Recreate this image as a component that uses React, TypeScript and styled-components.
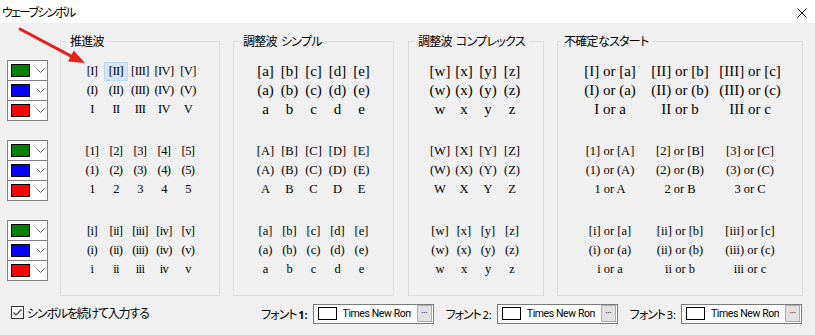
import React from "react";
import styled, { createGlobalStyle } from "styled-components";

const GlobalStyle = createGlobalStyle`
  html, body { margin: 0; padding: 0; background: #f0f0f0; }
  body { font-family: "Noto Sans CJK JP", "Noto Sans", sans-serif; overflow: hidden; }
`;

const Window = styled.div`
  position: relative;
  width: 815px;
  height: 335px;
  background: #f0f0f0;
  display: flex;
  flex-direction: column;
  overflow: hidden;
  color: #000;
`;

const TitleBar = styled.div`
  height: 23px;
  background: #fff;
  display: flex;
  align-items: center;
  justify-content: space-between;
  padding: 0 8px 0 2px;
  box-sizing: border-box;
`;

const Title = styled.span`
  font-size: 12px;
  line-height: 16px;
  font-feature-settings: "palt" 1;
  letter-spacing: -1.8px;
`;

const CloseButton = styled.div`
  width: 10px;
  height: 10px;
  display: flex;
  margin-top: 2px;
`;

const Main = styled.div`
  display: flex;
  align-items: flex-start;
  padding: 10px 0 0 7px;
`;

const PickerColumn = styled.div`
  display: flex;
  flex-direction: column;
  gap: 19px;
  padding-top: 27px;
`;

const PickerStack = styled.div`
  width: 41px;
  box-sizing: border-box;
  border: 1px solid #828282;
  background: #fff;
  display: flex;
  flex-direction: column;
`;

const PickerRow = styled.div<{ $first?: boolean }>`
  height: 19px;
  display: flex;
  align-items: center;
  padding-left: 3px;
  gap: 6px;
  border-top: ${(p) => (p.$first ? "none" : "1px solid #828282")};
`;

const Swatch = styled.div<{ $color: string }>`
  width: 19px;
  height: 13px;
  box-sizing: border-box;
  border: 1px solid #000;
  background: ${(p) => p.$color};
`;

const Chevron = styled.svg`
  width: 9px;
  height: 5px;
`;

const Group = styled.fieldset<{ $width: number; $gapLeft: number }>`
  width: ${(p) => p.$width}px;
  margin: 0 0 0 ${(p) => p.$gapLeft}px;
  padding: 11px 0 15px 0;
  box-sizing: border-box;
  border: 1px solid #dcdcdc;
  min-width: 0;
`;

const Legend = styled.legend<{ $inset: number }>`
  font-size: 12px;
  line-height: 16px;
  margin-left: ${(p) => p.$inset}px;
  padding: 0 4px 0 4px;
  white-space: pre;
  font-feature-settings: "palt" 1;
  letter-spacing: -0.7px;
`;

const Sections = styled.div`
  display: flex;
  flex-direction: column;
  gap: 20px;
`;

const SymbolGrid = styled.div<{ $cols: number; $cellW: number }>`
  height: 60px;
  display: grid;
  grid-template-columns: repeat(${(p) => p.$cols}, ${(p) => p.$cellW}px);
  grid-auto-rows: 19px;
  justify-content: center;
  align-content: center;
`;

const SymbolCell = styled.div<{ $size: number; $tight?: boolean; $selected?: boolean }>`
  display: flex;
  align-items: center;
  justify-content: center;
  box-sizing: border-box;
  font-family: "Liberation Serif", "Times New Roman", serif;
  font-size: ${(p) => p.$size}px;
  letter-spacing: ${(p) => (p.$tight ? "-0.6px" : "0")};
  line-height: 1;
  white-space: nowrap;
  border: 1px solid ${(p) => (p.$selected ? "#bcd8f0" : "transparent")};
  background: ${(p) => (p.$selected ? "#d5e6f5" : "transparent")};
`;

const Footer = styled.div`
  height: 35px;
  display: flex;
  align-items: center;
  padding: 0 13px 0 11px;
  gap: 12px;
`;

const CheckRow = styled.label`
  display: flex;
  align-items: center;
  gap: 3px;
  font-size: 12px;
  font-feature-settings: "palt" 1;
  letter-spacing: -1.2px;
  margin-top: -3px;
`;

const CheckBox = styled.span`
  width: 13px;
  height: 13px;
  box-sizing: border-box;
  border: 1px solid #333;
  background: #fff;
  display: flex;
  align-items: center;
  justify-content: center;
`;

const FontField = styled.div<{ $push?: boolean }>`
  display: flex;
  align-items: center;
  gap: 5px;
  margin-left: ${(p) => (p.$push ? "auto" : "0")};
`;

const FontLabel = styled.span`
  font-size: 12px;
  font-feature-settings: "palt" 1;
  letter-spacing: -1px;
  white-space: pre;
`;

const FontNum = styled.span<{ $bold?: boolean }>`
  font-family: "Noto Sans", sans-serif;
  font-weight: ${(p) => (p.$bold ? 700 : 400)};
  font-size: 11px;
  letter-spacing: 0;
`;

const FontBox = styled.div`
  width: 121px;
  height: 20px;
  box-sizing: border-box;
  border: 1px solid #7a7a7a;
  background: #fff;
  display: flex;
  align-items: center;
  padding: 0 1px 0 4px;
  gap: 6px;
`;

const FontSwatch = styled.div`
  width: 19px;
  height: 13px;
  flex-shrink: 0;
  box-sizing: border-box;
  border: 1px solid #000;
  background: #fff;
`;

const FontName = styled.span`
  flex: 1;
  min-width: 0;
  overflow: hidden;
  white-space: nowrap;
  font-family: "Roboto", "Noto Sans", sans-serif;
  font-size: 10.5px;
  letter-spacing: -0.4px;
`;

const DotsButton = styled.div`
  width: 15px;
  height: 17px;
  flex-shrink: 0;
  box-sizing: border-box;
  border: 1px solid #adadad;
  background: #e1e1e1;
  display: flex;
  align-items: center;
  justify-content: center;
  font-family: "DejaVu Sans", sans-serif;
  font-size: 8px;
  letter-spacing: -0.5px;
  color: #222;
`;

const ArrowOverlay = styled.svg`
  position: absolute;
  left: 0;
  top: 0;
  width: 100px;
  height: 80px;
  pointer-events: none;
`;

type Section = { rows: string[][]; size: number };
type GroupDef = {
  title: string;
  width: number;
  gapLeft: number;
  cellW: number;
  inset: number;
  tight?: boolean;
  sections: Section[];
};

const triple = (bases: string[], size: number): Section => ({
  size,
  rows: [bases.map((b) => `[${b}]`), bases.map((b) => `(${b})`), bases],
});

const orTriple = (a: string[], b: string[], size: number): Section => ({
  size,
  rows: [
    a.map((x, i) => `[${x}] or [${b[i]}]`),
    a.map((x, i) => `(${x}) or (${b[i]})`),
    a.map((x, i) => `${x} or ${b[i]}`),
  ],
});

const groups: GroupDef[] = [
  {
    title: "推進波",
    width: 160,
    gapLeft: 12,
    cellW: 24,
    inset: 5,
    tight: true,
    sections: [
      triple(["I", "II", "III", "IV", "V"], 12.5),
      triple(["1", "2", "3", "4", "5"], 12.5),
      triple(["i", "ii", "iii", "iv", "v"], 12.5),
    ],
  },
  {
    title: "調整波  シンプル",
    width: 161,
    gapLeft: 13,
    cellW: 24,
    inset: 5,
    sections: [
      triple(["a", "b", "c", "d", "e"], 15),
      triple(["A", "B", "C", "D", "E"], 12.5),
      triple(["a", "b", "c", "d", "e"], 12.5),
    ],
  },
  {
    title: "調整波  コンプレックス",
    width: 136,
    gapLeft: 14,
    cellW: 24,
    inset: 5,
    sections: [
      triple(["w", "x", "y", "z"], 15),
      triple(["W", "X", "Y", "Z"], 12.5),
      triple(["w", "x", "y", "z"], 12.5),
    ],
  },
  {
    title: "不確定なスタート",
    width: 246,
    gapLeft: 13,
    cellW: 70,
    inset: 2,
    sections: [
      orTriple(["I", "II", "III"], ["a", "b", "c"], 15),
      orTriple(["1", "2", "3"], ["A", "B", "C"], 12.5),
      orTriple(["i", "ii", "iii"], ["a", "b", "c"], 12.5),
    ],
  },
];

const pickerColors = ["#008000", "#0000ff", "#ff0000"];

export default function App() {
  return (
    <>
      <GlobalStyle />
      <Window>
        <TitleBar>
          <Title>ウェーブシンボル</Title>
          <CloseButton>
            <svg width="10" height="10" viewBox="0 0 10 10">
              <path d="M0.5 0.5 L9.5 9.5 M9.5 0.5 L0.5 9.5" stroke="#000" strokeWidth="1" />
            </svg>
          </CloseButton>
        </TitleBar>
        <Main>
          <PickerColumn>
            {[0, 1, 2].map((s) => (
              <PickerStack key={s}>
                {pickerColors.map((c, i) => (
                  <PickerRow key={c} $first={i === 0}>
                    <Swatch $color={c} />
                    <Chevron viewBox="0 0 9 5">
                      <path d="M0.5 0.5 L4.5 4.5 L8.5 0.5" fill="none" stroke="#606060" strokeWidth="1" />
                    </Chevron>
                  </PickerRow>
                ))}
              </PickerStack>
            ))}
          </PickerColumn>
          {groups.map((g) => (
            <Group key={g.title} $width={g.width} $gapLeft={g.gapLeft}>
              <Legend $inset={g.inset}>{g.title}</Legend>
              <Sections>
                {g.sections.map((sec, si) => (
                  <SymbolGrid key={si} $cols={sec.rows[0].length} $cellW={g.cellW}>
                    {sec.rows.flatMap((row, ri) =>
                      row.map((t, ci) => (
                        <SymbolCell
                          key={`${ri}-${ci}`}
                          $size={sec.size}
                          $tight={g.tight}
                          $selected={g.title === "推進波" && si === 0 && ri === 0 && ci === 1}
                        >
                          {t}
                        </SymbolCell>
                      ))
                    )}
                  </SymbolGrid>
                ))}
              </Sections>
            </Group>
          ))}
        </Main>
        <Footer>
          <CheckRow>
            <CheckBox>
              <svg width="11" height="11" viewBox="0 0 11 11">
                <path d="M1.5 5.5 L4 8 L9.5 2.5" fill="none" stroke="#333" strokeWidth="1.2" />
              </svg>
            </CheckBox>
            シンボルを続けて入力する
          </CheckRow>
          {[1, 2, 3].map((n) => (
            <FontField key={n} $push={n === 1}>
              <FontLabel>
                フォント <FontNum $bold={n === 1}>{n}:</FontNum>
              </FontLabel>
              <FontBox>
                <FontSwatch />
                <FontName>Times New Roman</FontName>
                <DotsButton>···</DotsButton>
              </FontBox>
            </FontField>
          ))}
        </Footer>
        <ArrowOverlay viewBox="0 0 100 80">
          <line x1="20" y1="29" x2="72" y2="56.6" stroke="#e8201a" strokeWidth="3" strokeLinecap="round" />
          <polygon points="85,63 68,61.5 73.8,50.5" fill="#e8201a" />
        </ArrowOverlay>
      </Window>
    </>
  );
}
